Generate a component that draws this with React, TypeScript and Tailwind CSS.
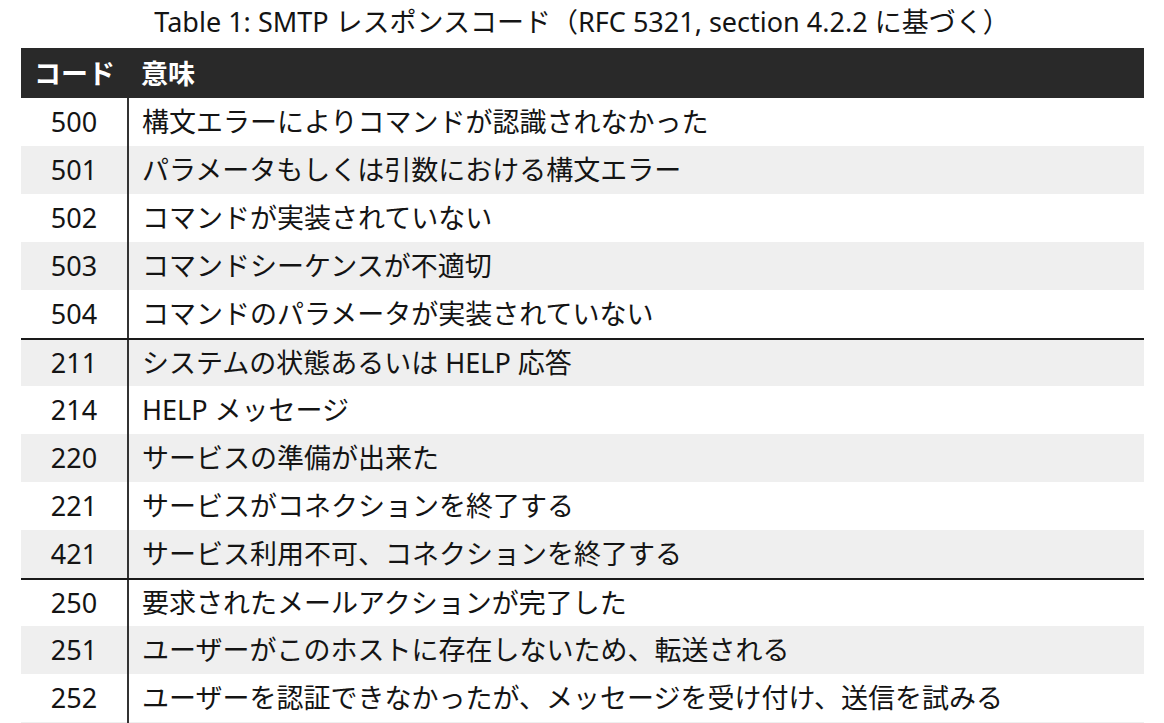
const groups: [string, string][][] = [
  [
    ["500", "構文エラーによりコマンドが認識されなかった"],
    ["501", "パラメータもしくは引数における構文エラー"],
    ["502", "コマンドが実装されていない"],
    ["503", "コマンドシーケンスが不適切"],
    ["504", "コマンドのパラメータが実装されていない"],
  ],
  [
    ["211", "システムの状態あるいは HELP 応答"],
    ["214", "HELP メッセージ"],
    ["220", "サービスの準備が出来た"],
    ["221", "サービスがコネクションを終了する"],
    ["421", "サービス利用不可、コネクションを終了する"],
  ],
  [
    ["250", "要求されたメールアクションが完了した"],
    ["251", "ユーザーがこのホストに存在しないため、転送される"],
    ["252", "ユーザーを認証できなかったが、メッセージを受け付け、送信を試みる"],
    ["", ""],
  ],
];

export default function App() {
  let idx = 0;
  return (
    <div
      className="w-[1164px] h-[723px] overflow-hidden bg-white text-[#141414]"
      style={{ fontFamily: '"Noto Sans", "Noto Sans CJK JP", sans-serif' }}
    >
      <div className="h-12 flex items-center justify-center text-[27px] pb-[3px]">
        Table 1: SMTP レスポンスコード（RFC 5321, section 4.2.2 に基づく）
      </div>
      <div className="mx-[21px] w-[1123px]">
        <div className="flex h-[50px] items-center bg-[#292929] text-white font-bold text-[27px] pt-[2px]">
          <div className="w-[107px] text-center">コード</div>
          <div className="pl-[13px]">意味</div>
        </div>
        {groups.map((rows, gi) =>
          rows.map(([code, text], ri) => {
            const gray = idx++ % 2 === 1;
            const first = gi > 0 && ri === 0;
            return (
              <div
                key={`${gi}-${ri}`}
                className={`flex h-12 items-center text-[27px] ${gray ? "bg-[#efefef]" : "bg-white"} ${first ? "border-t-2 border-[#1a1a1a]" : ""}`}
              >
                <div className="w-[106px] text-center">{code}</div>
                <div className="self-stretch w-[2px] bg-[#333]" />
                <div className="pl-[13px] whitespace-nowrap">{text}</div>
              </div>
            );
          })
        )}
      </div>
    </div>
  );
}
